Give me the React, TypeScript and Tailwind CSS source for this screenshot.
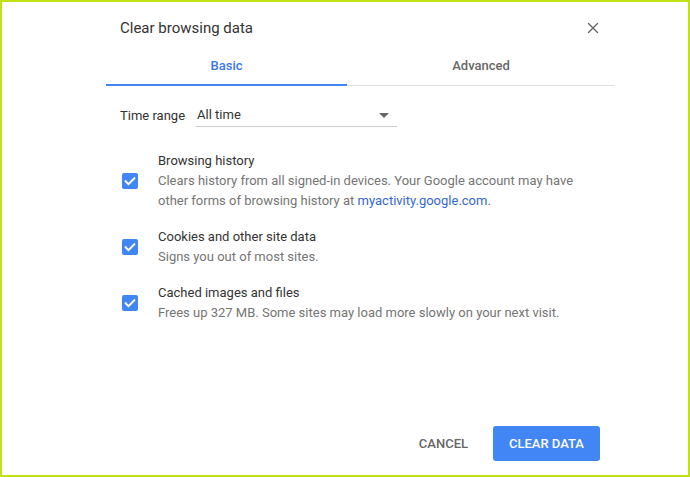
import { X } from 'lucide-react';

type Item = {
    title: string;
    desc: React.ReactNode;
};

const items: Item[] = [
    {
        title: 'Browsing history',
        desc: (
            <>
                Clears history from all signed-in devices. Your Google account may have
                <br />
                other forms of browsing history at{' '}
                <span className="text-[#3367d6]">myactivity.google.com</span>.
            </>
        ),
    },
    { title: 'Cookies and other site data', desc: 'Signs you out of most sites.' },
    { title: 'Cached images and files', desc: 'Frees up 327 MB. Some sites may load more slowly on your next visit.' },
];

function Check() {
    return (
        <div className="flex size-4 shrink-0 items-center justify-center rounded-[2px] bg-[#4285f4]">
            <svg viewBox="0 0 16 16" className="size-4" fill="none">
                <path d="M3.6 8.2l2.9 2.9 5.9-5.9" stroke="white" strokeWidth="1.9" strokeLinecap="square" />
            </svg>
        </div>
    );
}

export default function App() {
    return (
        <div className="flex h-[477px] w-[690px] flex-col border-2 border-[#c2e112] bg-white font-['Roboto',sans-serif] text-[13px]">
            <div className="ml-[104px] flex w-[509px] flex-1 flex-col">
                {/* Header */}
                <div className="flex h-[50px] items-center justify-between pl-[14px] pr-[13px] pt-[2px]">
                    <h1 className="text-[15px] text-[#333]">Clear browsing data</h1>
                    <X className="size-[18px] text-[#666]" strokeWidth={1.8} />
                </div>

                {/* Tabs */}
                <div className="flex">
                    <div className="flex h-[34px] w-[241px] items-start justify-center border-b-2 border-[#4285f4] pt-[4px] font-medium text-[#3b78e7]">
                        Basic
                    </div>
                    <div className="flex h-[34px] flex-1 items-start justify-center border-b border-[#e0e0e0] pt-[4px] font-medium text-[#666]">
                        Advanced
                    </div>
                </div>

                {/* Time range */}
                <div className="mt-[15px] flex h-[26px] items-end pl-[14px]">
                    <span className="pb-[2px] text-[#333]">Time range</span>
                    <div className="ml-[11px] flex h-[26px] w-[201px] items-end justify-between border-b border-[#ccc] pb-[2px] pl-[1px] pr-[8px] text-[#333]">
                        <span>All time</span>
                        <svg viewBox="0 0 10 5" className="mb-[6px] h-[5px] w-[10px]">
                            <path d="M0 0h10L5 5z" fill="#666" />
                        </svg>
                    </div>
                </div>

                {/* Options */}
                <div className="mt-[24px] flex flex-col gap-4 pl-[16px]">
                    {items.map((item) => (
                        <div key={item.title} className="flex items-center gap-5 leading-[20px]">
                            <Check />
                            <div>
                                <div className="text-[#333]">{item.title}</div>
                                <div className="text-[#757575]">{item.desc}</div>
                            </div>
                        </div>
                    ))}
                </div>

                {/* Actions */}
                <div className="mt-auto mb-[14px] flex items-center justify-end gap-[9px] pr-[15px]">
                    <button type="button" className="h-[35px] px-4 font-medium text-[#666]">
                        CANCEL
                    </button>
                    <button type="button" className="h-[35px] w-[107px] rounded-[3px] bg-[#4285f4] font-medium text-white">
                        CLEAR DATA
                    </button>
                </div>
            </div>
        </div>
    );
}
